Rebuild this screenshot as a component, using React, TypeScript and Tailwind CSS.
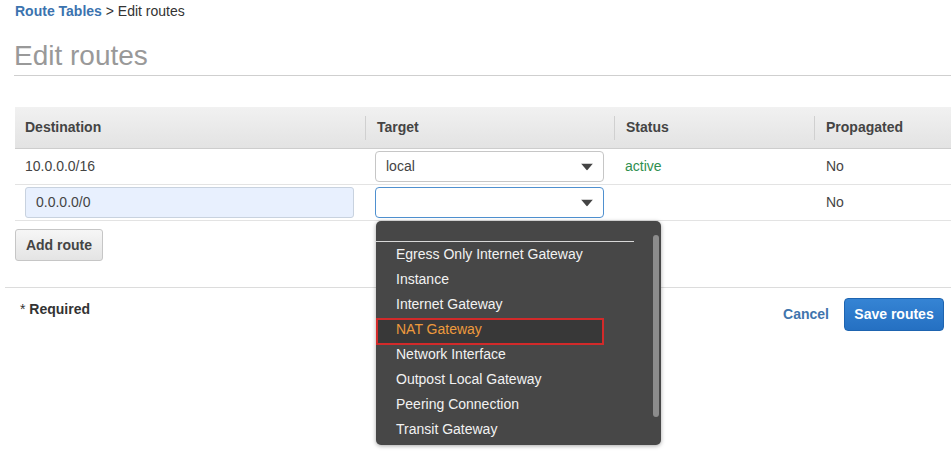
const options = [
  "Egress Only Internet Gateway",
  "Instance",
  "Internet Gateway",
  "NAT Gateway",
  "Network Interface",
  "Outpost Local Gateway",
  "Peering Connection",
  "Transit Gateway",
];

function Caret() {
  return (
    <svg width="12" height="7" viewBox="0 0 12 7" className="absolute right-[10px] top-1/2 -translate-y-1/2">
      <path d="M0 0 L12 0 L6 7 Z" fill="#444" />
    </svg>
  );
}

function HeaderCell({ label, first }: { label: string; first?: boolean }) {
  return (
    <div className="flex h-full items-center">
      {!first && <span className="h-[24px] w-px bg-[#d0d0d0]" />}
      <span className={first ? "pl-[10px]" : "pl-[11px]"}>{label}</span>
    </div>
  );
}

function Dropdown() {
  return (
    <div className="absolute left-0 top-[calc(100%+4px)] z-10 w-[285px] rounded-[5px] bg-[#474747] pt-[20px] pb-[3px] shadow-[0_1px_4px_rgba(0,0,0,0.35)]">
      <div className="h-px w-[258px] bg-[#d8d8d8]" />
      <ul>
        {options.map((o) => {
          const active = o === "NAT Gateway";
          return (
            <li
              key={o}
              className={
                "relative flex h-[25px] items-center pl-[20px] text-[14px] " +
                (active ? "text-[#ee9a3d]" : "text-[#f2f2f2]")
              }
            >
              {active && (
                <span className="absolute left-0 top-[1px] h-[27px] w-[228px] border-2 border-[#d22a2a] bg-[#383838]" />
              )}
              <span className="relative">{o}</span>
            </li>
          );
        })}
      </ul>
      <div className="absolute right-[2px] top-[14px] h-[182px] w-[6px] rounded-full bg-[#8c8c8c]" />
    </div>
  );
}

export default function App() {
  return (
    <div
      className="min-h-[453px] bg-white text-[#444]"
      style={{ fontFamily: '"Liberation Sans", Arial, sans-serif' }}
    >
      <div className="pl-[15px] pt-[3px] text-[14px] leading-4">
        <span className="font-bold text-[#3b73af]">Route Tables</span>
        <span className="text-[#333]"> &gt; Edit routes</span>
      </div>

      <h1 className="ml-[14px] mt-[20px] border-b border-[#cfcfcf] pb-[2px] text-[28px] leading-[34px] text-[#999]">
        Edit routes
      </h1>

      <div className="pl-[15px]">
        <div className="mt-[31px] text-[14px]">
          <div className="grid h-[42px] grid-cols-[350px_249px_200px_1fr] border-b border-[#cdcdcd] bg-gradient-to-b from-[#f1f1f1] to-[#e3e3e3] font-bold text-[#444]">
            <HeaderCell label="Destination" first />
            <HeaderCell label="Target" />
            <HeaderCell label="Status" />
            <HeaderCell label="Propagated" />
          </div>

          <div className="grid h-[36px] grid-cols-[350px_249px_200px_1fr] items-center border-b border-[#e3e3e3]">
            <div className="pl-[10px]">10.0.0.0/16</div>
            <div className="pl-[10px]">
              <div className="relative flex h-[31px] w-[229px] items-center rounded-[4px] border border-[#c6c6c6] bg-white pl-[10px]">
                local
                <Caret />
              </div>
            </div>
            <div className="pl-[11px] text-[#2f8f4f]">active</div>
            <div className="pl-[12px]">No</div>
          </div>

          <div className="grid h-[36px] grid-cols-[350px_249px_200px_1fr] items-center border-b border-[#e3e3e3]">
            <div className="pl-[10px]">
              <div className="flex h-[31px] w-[329px] items-center rounded-[3px] border border-[#c8d2df] bg-[#e8f0fe] pl-[10px]">
                0.0.0.0/0
              </div>
            </div>
            <div className="pl-[10px]">
              <div className="relative h-[31px] w-[229px] rounded-[4px] border border-[#4f90cf] bg-white">
                <Caret />
                <Dropdown />
              </div>
            </div>
            <div />
            <div className="pl-[12px]">No</div>
          </div>
        </div>

        <button className="mt-[8px] h-[32px] w-[88px] rounded-[3px] border border-[#c6c6c6] bg-gradient-to-b from-[#f6f6f6] to-[#e4e4e4] text-[14px] font-bold text-[#444]">
          Add route
        </button>
      </div>

      <div className="ml-[5px] mt-[26px] border-t border-[#dcdcdc]" />

      <div className="flex items-start justify-between pl-[20px] pr-[7px] pt-[10px] text-[14px]">
        <div className="pt-[1px] leading-5 text-[#333]">
          * <span className="font-bold">Required</span>
        </div>
        <div className="flex items-center gap-[15px]">
          <span className="font-bold text-[#3f75ad]">Cancel</span>
          <button className="h-[33px] w-[100px] rounded-[4px] border border-[#1e64b0] bg-gradient-to-b from-[#3584d4] to-[#2570c2] font-bold text-white">
            Save routes
          </button>
        </div>
      </div>
    </div>
  );
}
